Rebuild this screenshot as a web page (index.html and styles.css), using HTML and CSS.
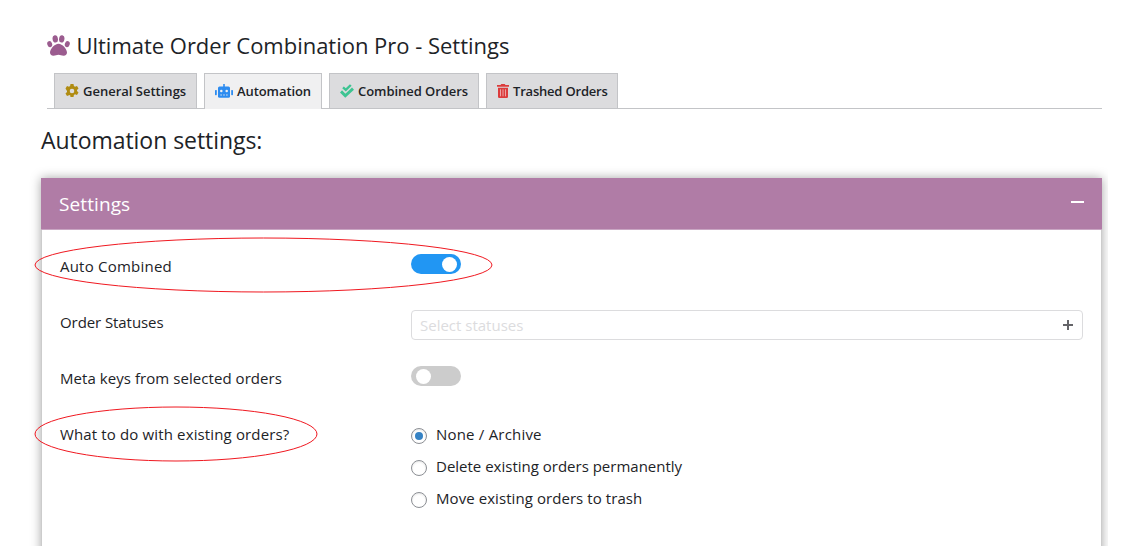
FILE: index.html
```html
<!DOCTYPE html>
<html lang="en">
<head>
<meta charset="utf-8">
<title>Ultimate Order Combination Pro - Settings</title>
<link rel="stylesheet" href="styles.css">
</head>
<body>
<main class="page">
  <h1 class="title">
    <svg class="paw" viewBox="0 0 24 22"><g fill="#9b5c8f"><ellipse cx="8.6" cy="4.1" rx="2.8" ry="3.8" transform="rotate(-10 8.6 4.1)"/><ellipse cx="15.4" cy="4.1" rx="2.8" ry="3.8" transform="rotate(10 15.4 4.1)"/><ellipse cx="2.8" cy="9.6" rx="2.5" ry="3.3" transform="rotate(-20 2.8 9.6)"/><ellipse cx="21.2" cy="9.6" rx="2.5" ry="3.3" transform="rotate(20 21.2 9.6)"/><path d="M12 9.2c-4 0-8.900 5.600-8.900 9.200 0 2 1.300 3.300 3.600 3.300 2.300 0 3.200-1 5.300-1s3 1 5.300 1c2.300 0 3.600-1.300 3.600-3.300 0-3.600-4.900-9.200-8.900-9.200z"/></g></svg>
    <span class="title-text">Ultimate Order Combination Pro - Settings</span>
  </h1>
  <nav class="tabs">
    <a class="tab tab-general">
      <svg class="icon gear" viewBox="0 0 14 14"><path fill="#b08c12" fill-rule="evenodd" d="M5.500 0h3l.4 2 1.100.650 2-.7 1.500 2.600-1.500 1.350v1.200l1.500 1.350-1.500 2.600-2-.7-1.100.650-.4 2h-3l-.4-2L4 11.350l-2 .7-1.500-2.600L2 8.100V6.900L.5 4.550 2 1.950l2 .7L5.100 2zM7 4.700a2.300 2.300 0 100 4.600 2.300 2.300 0 000-4.600z"/></svg>
      <span>General Settings</span>
    </a>
    <a class="tab tab-active">
      <svg class="icon robot" viewBox="0 0 18 14"><g fill="#2d8cf0"><rect x="8.200" width="1.600" height="3"/><rect x="3" y="2.500" width="12" height="11.300" rx="1.500"/><rect y="6" width="1.800" height="5.200" rx=".6"/><rect x="16.200" y="6" width="1.800" height="5.200" rx=".6"/></g><g fill="#f0f0f1"><circle cx="6.300" cy="7" r="1.250"/><circle cx="11.700" cy="7" r="1.250"/><path d="M5.300 10.500h1.700v1H5.300zM8.150 10.500h1.700v1h-1.700zM11 10.500h1.700v1H11z" opacity=".8"/></g></svg>
      <span>Automation</span>
    </a>
    <a class="tab tab-combined">
      <svg class="icon checks" viewBox="0 0 14 14"><path fill="none" stroke="#3dc492" stroke-width="2.400" d="M3 3.400l2.800 2.500L10.800 1"/><path fill="none" stroke="#3dc492" stroke-width="2.900" d="M1 7.400l4.300 4.300L13 4.600"/></svg>
      <span>Combined Orders</span>
    </a>
    <a class="tab tab-trashed">
      <svg class="icon trash" viewBox="0 0 12 14"><path fill="#dc3c3c" d="M0 1h3.500L4.300 0h3.400l.8 1H12v1.700H0zM1 3.700h10V12.700Q11 14 9.700 14H2.300Q1 14 1 12.700z"/><path stroke="#eba5a7" stroke-width="1" d="M3.500 5.300v7M6 5.300v7M8.500 5.300v7"/></svg>
      <span>Trashed Orders</span>
    </a>
  </nav>
  <h2 class="subtitle"><span>Automation settings:</span></h2>
  <section class="panel">
    <header class="panel-head"><span class="panel-title">Settings</span><i class="minus"></i></header>
    <div class="panel-body">
      <div class="row row-auto"><span class="label l-auto">Auto Combined</span><span class="switch on"></span>
        <svg class="mark mark-auto" viewBox="0 0 459 56"><ellipse cx="229.500" cy="28" rx="228.500" ry="27"/></svg>
      </div>
      <div class="row row-status"><span class="label l-status">Order Statuses</span>
        <div class="select"><span class="placeholder">Select statuses</span><svg class="plus" viewBox="0 0 10 10"><path d="M5 0v10M0 5h10"/></svg></div>
      </div>
      <div class="row row-meta"><span class="label l-meta">Meta keys from selected orders</span><span class="switch"></span></div>
      <div class="row row-existing"><span class="label l-what">What to do with existing orders?</span>
        <div class="radios">
          <label class="option"><i class="radio checked"></i><span class="o-none">None / Archive</span></label>
          <label class="option"><i class="radio"></i><span class="o-delete">Delete existing orders permanently</span></label>
          <label class="option"><i class="radio"></i><span class="o-move">Move existing orders to trash</span></label>
        </div>
        <svg class="mark mark-existing" viewBox="0 0 284 56"><ellipse cx="142" cy="28" rx="141" ry="27"/></svg>
      </div>
    </div>
  </section>
</main>
</body>
</html>
```
FILE: styles.css
```css
* { box-sizing: border-box; }
body { margin: 0; background: #fff; color: #1d2327; font-family: "Open Sans", "Noto Sans", sans-serif; font-size: 15px; }
.page { width: 1108px; height: 546px; padding: 30px 6px 0 41px; overflow: hidden; }
.title { display: flex; align-items: center; height: 32px; margin: 0 0 11px 6px; font-size: 22px; font-weight: 400; white-space: nowrap; }
.title-text { margin-top: -2px; letter-spacing: -.02px; }
.paw { width: 23px; height: 21px; margin: -1px 6.500px 0 0; }
.tabs { display: flex; gap: 7px; height: 36px; margin-left: 6px; padding-left: 7px; border-bottom: 1px solid #c3c4c7; }
.tab { display: flex; align-items: center; height: 35px; padding-left: 10px; border: 1px solid #c3c4c7; border-bottom: 0; background: #dcdcde; font-size: 13px; font-weight: 600; white-space: nowrap; }
.tab-general { width: 143px; }
.tab-active { width: 118px; height: 36px; padding-bottom: 1px; background: #f0f0f1; letter-spacing: -.08px; }
.tab-combined { width: 150px; letter-spacing: -.05px; }
.tab-trashed { width: 132px; letter-spacing: -.2px; }
.icon { flex: none; height: 14px; margin-right: 4px; }
.gear, .checks { width: 14px; }
.robot { width: 18px; }
.trash { width: 12px; }
.subtitle { height: 32px; margin: 15px 0 22px; font-size: 23px; line-height: 32px; font-weight: 400; letter-spacing: -.05px; white-space: nowrap; }
.panel { height: 400px; border: 1px solid #ccc; border-top: 0; background: #fff; box-shadow: 0 0 10px rgba(0, 0, 0, .35); }
.panel-head { display: flex; justify-content: space-between; height: 52px; margin: 0 -1px; padding: 0 18px; border-bottom: 1px solid #c9a6c3; background: #b07ca6; color: #fff; font-size: 19px; line-height: 52px; }
.panel-title { letter-spacing: .1px; }
.minus { width: 13px; height: 2px; margin-top: 23px; background: #fff; }
.panel-body { padding: 8px 18px 0; }
.row { position: relative; display: grid; grid-template-columns: 351px 672px; height: 56px; white-space: nowrap; }
.row-existing { height: 120px; }
.label { padding-top: 16px; line-height: 24px; }
.l-auto { letter-spacing: .22px; }
.l-status { letter-spacing: -.08px; }
.l-meta { letter-spacing: .06px; }
.l-what { letter-spacing: .14px; }
.switch { width: 50px; height: 20px; margin-top: 16px; padding: 3px 4.500px; border-radius: 10px; background: #ccc; }
.switch::before { content: ""; display: block; width: 15px; height: 15px; border-radius: 50%; background: #fff; }
.switch.on { background: #2196f3; }
.switch.on::before { margin-left: 26px; }
.select { display: flex; align-items: center; justify-content: space-between; height: 30px; margin-top: 16px; padding: 0 9px 0 8px; border: 1px solid #dcdcde; border-radius: 4px; color: #dcdcde; }
.plus { width: 10px; height: 10px; stroke: #646468; stroke-width: 2; }
.radios { display: flex; flex-direction: column; padding-top: 13px; }
.option { display: flex; align-items: center; height: 32px; }
.option span { margin-top: -2px; }
.o-none { letter-spacing: .2px; }
.o-move { letter-spacing: .07px; }
.radio { display: flex; align-items: center; justify-content: center; width: 16px; height: 16px; margin: 2px 9px 0 0; border: 1px solid #8c8f94; border-radius: 50%; box-shadow: inset 0 1px 2px rgba(0, 0, 0, .1); }
.checked::before { content: ""; width: 8px; height: 8px; border-radius: 50%; background: #3582c4; }
.mark { position: absolute; left: -26px; height: 56px; fill: none; stroke: #f01820; stroke-width: 1; }
.mark-auto { top: -1px; width: 459px; }
.mark-existing { top: 0; width: 284px; }
```
